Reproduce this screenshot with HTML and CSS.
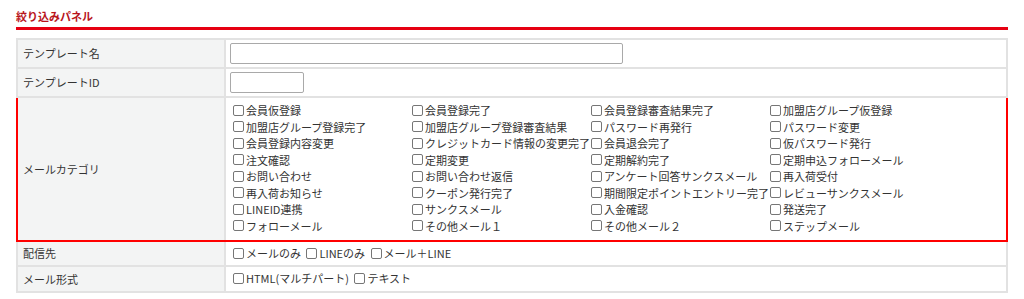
FILE: index.html
```html
<!DOCTYPE html>
<html lang="ja">
<head>
  <meta charset="UTF-8">
  <title>絞り込みパネル</title>
  <link rel="stylesheet" href="styles.css">
</head>
<body>
<div class="panel">
  <h2 class="panel-title">絞り込みパネル</h2>
  <table class="filter">
    <tr>
      <th>テンプレート名</th>
      <td class="input-cell"><input type="text" class="text-long"></td>
    </tr>
    <tr>
      <th>テンプレートID</th>
      <td class="input-cell"><input type="text" class="text-short"></td>
    </tr>
    <tr class="hl">
      <th>メールカテゴリ</th>
      <td class="check-cell">
        <div class="check-grid">
          <label><input type="checkbox">会員仮登録</label>
          <label><input type="checkbox">会員登録完了</label>
          <label><input type="checkbox">会員登録審査結果完了</label>
          <label><input type="checkbox">加盟店グループ仮登録</label>
          <label><input type="checkbox">加盟店グループ登録完了</label>
          <label><input type="checkbox">加盟店グループ登録審査結果</label>
          <label><input type="checkbox">パスワード再発行</label>
          <label><input type="checkbox">パスワード変更</label>
          <label><input type="checkbox">会員登録内容変更</label>
          <label><input type="checkbox">クレジットカード情報の変更完了</label>
          <label><input type="checkbox">会員退会完了</label>
          <label><input type="checkbox">仮パスワード発行</label>
          <label><input type="checkbox">注文確認</label>
          <label><input type="checkbox">定期変更</label>
          <label><input type="checkbox">定期解約完了</label>
          <label><input type="checkbox">定期申込フォローメール</label>
          <label><input type="checkbox">お問い合わせ</label>
          <label><input type="checkbox">お問い合わせ返信</label>
          <label><input type="checkbox">アンケート回答サンクスメール</label>
          <label><input type="checkbox">再入荷受付</label>
          <label><input type="checkbox">再入荷お知らせ</label>
          <label><input type="checkbox">クーポン発行完了</label>
          <label><input type="checkbox">期間限定ポイントエントリー完了</label>
          <label><input type="checkbox">レビューサンクスメール</label>
          <label><input type="checkbox">LINEID連携</label>
          <label><input type="checkbox">サンクスメール</label>
          <label><input type="checkbox">入金確認</label>
          <label><input type="checkbox">発送完了</label>
          <label><input type="checkbox">フォローメール</label>
          <label><input type="checkbox">その他メール１</label>
          <label><input type="checkbox">その他メール２</label>
          <label><input type="checkbox">ステップメール</label>
        </div>
      </td>
    </tr>
    <tr>
      <th>配信先</th>
      <td class="check-cell inline">
        <label><input type="checkbox">メールのみ</label>
        <label><input type="checkbox">LINEのみ</label>
        <label><input type="checkbox">メール＋LINE</label>
      </td>
    </tr>
    <tr>
      <th>メール形式</th>
      <td class="check-cell inline">
        <label><input type="checkbox">HTML(マルチパート)</label>
        <label><input type="checkbox">テキスト</label>
      </td>
    </tr>
  </table>
</div>
</body>
</html>
```

FILE: styles.css
```css
body {
  margin: 0;
  background: #fff;
  color: #333;
  font-family: "Noto Sans CJK JP", "Noto Sans", sans-serif;
  font-size: 11px;
}
.panel {
  padding: 8px 16px;
}
.panel-title {
  margin: 0 0 8px;
  padding: 0 0 3px;
  font-size: 11px;
  line-height: 16px;
  font-weight: bold;
  color: #b8141b;
  border-bottom: 3px solid #e60012;
}
table.filter {
  width: 100%;
  border-collapse: collapse;
}
.filter th, .filter td {
  border: 2px solid #e2e2e2;
  line-height: 16.5px;
}
.filter th {
  width: 196px;
  background: #f3f4f4;
  font-weight: normal;
  text-align: left;
  padding: 0 5px;
}
.input-cell {
  padding: 3px 4px;
}
.input-cell input {
  height: 21px;
  box-sizing: border-box;
  border: 1px solid #a9a9a9;
  border-radius: 2px;
  margin: 0;
  display: block;
}
.text-long { width: 393px; }
.text-short { width: 74px; }
.check-cell {
  padding: 3px 5px 3px 7px;
}
.check-grid {
  display: grid;
  grid-template-columns: repeat(4, 179px);
}
.check-cell label {
  display: flex;
  align-items: center;
  white-space: nowrap;
}
.check-cell.inline label {
  display: inline-flex;
  margin-right: 3px;
}
.check-cell input[type="checkbox"] {
  appearance: none;
  width: 11px;
  height: 11px;
  margin: 0 2px 0 0;
  border: 1px solid #767676;
  border-radius: 2px;
  background: #fff;
}
.filter tr.hl th,
.filter tr.hl td {
  border-top: 2px solid #f00;
  border-bottom: 2px solid #f00;
}
.filter tr.hl th { border-left: 2px solid #f00; }
.filter tr.hl td { border-right: 2px solid #f00; }
.hl .check-cell {
  padding-top: 4px;
  padding-bottom: 6px;
}
```
